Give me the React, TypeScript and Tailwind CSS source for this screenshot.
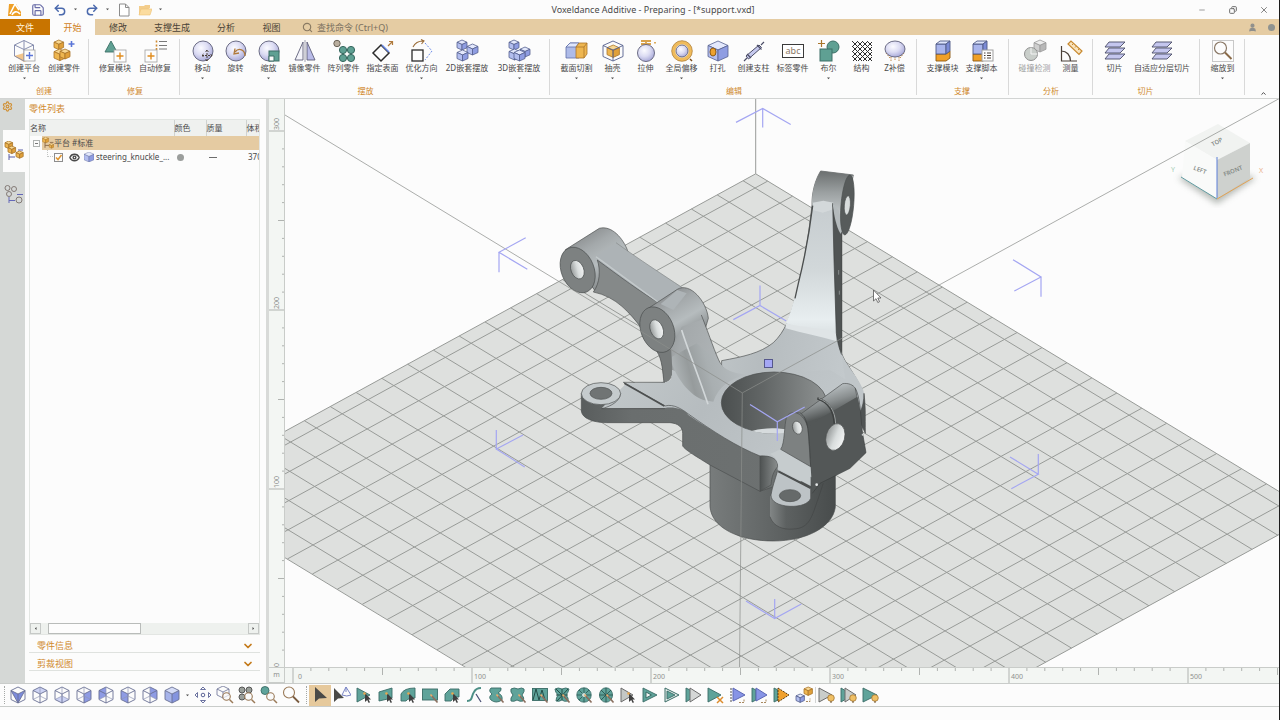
import type { ReactNode } from "react";
import {
  ChevronDown,
  ChevronUp,
  Copy,
  Eye,
  Minus,
  Redo2,
  Save,
  Search,
  Settings,
  Undo2,
  User,
  X,
} from "lucide-react";

type Tool = {
  label: string;
  icon: ReactNode;
  width?: string;
  menu?: boolean;
  disabled?: boolean;
};

type Group = { name: string; pad: string; tools: Tool[] };

const W2 = "w-[33px]";
const W4 = "w-[39px]";

function Svg({ children }: { children: ReactNode }) {
  return (
    <svg viewBox="0 0 24 24" className="w-6 h-6 block" fill="none" aria-hidden="true">
      {children}
    </svg>
  );
}

/* Small shaded box, reused by most of the ribbon icons */
function Box({ x = 0, y = 0, s = 1, tone = "blue" }: { x?: number; y?: number; s?: number; tone?: string }) {
  const tones: Record<string, string[]> = {
    blue: ["#e3e8fc", "#b3beef", "#8f9de2", "#56618f"],
    gold: ["#f8d791", "#eeb650", "#e0a03a", "#a9752a"],
    gray: ["#ececec", "#cfcfcf", "#b8b8b8", "#9a9a9a"],
  };
  const [top, left, right, line] = tones[tone];
  return (
    <g transform={`translate(${x} ${y}) scale(${s})`} stroke={line} strokeWidth={0.8 / s} strokeLinejoin="round">
      <path d="M10 0 20 4.500 10 9 0 4.500Z" fill={top} />
      <path d="M0 4.500 10 9V20L0 15.500Z" fill={left} />
      <path d="M20 4.500 10 9V20L20 15.500Z" fill={right} />
    </g>
  );
}

function Ball({ cx = 12, cy = 12, r = 10 }: { cx?: number; cy?: number; r?: number }) {
  return <circle cx={cx} cy={cy} r={r} fill="url(#ball)" stroke="#5d5f78" strokeWidth="0.9" />;
}

function PlusBox({ x, y }: { x: number; y: number }) {
  return (
    <g>
      <rect x={x} y={y} width="12" height="12" fill="#fdfdfd" stroke="#a0a0a0" strokeWidth="0.8" />
      <path d={`M${x + 6} ${y + 2.5}v7M${x + 2.5} ${y + 6}h7`} stroke="#e08c1e" strokeWidth="1.4" />
    </g>
  );
}

function Layers() {
  return (
    <Svg>
      {[15, 9, 3].map((y) => (
        <path key={y} d={`M6 ${y}h16l-5 5H2z`} fill="#c4c6ee" stroke="#4b4d66" strokeWidth="0.9" />
      ))}
    </Svg>
  );
}

const groups: Group[] = [
  {
    name: "创建",
    pad: "pl-1 pr-[5px]",
    tools: [
      {
        label: "创建平台",
        width: "w-10",
        menu: true,
        icon: (
          <Svg>
            <path d="M2 17 12 14l6 7-6 2z" fill="#f2c58c" />
            <path d="M12 1.500 21.500 6 12 10.500 2.500 6ZM2.500 6V17L12 22M12 10.500V22M21.500 6v7M12 1.500v9" stroke="#7d85a8" strokeWidth="0.9" />
            <rect x="12" y="11" width="11" height="11" fill="#fdfdfd" stroke="#a0a0a0" strokeWidth="0.8" />
            <path d="M17.500 13v7M14 16.500h7" stroke="#5b76d8" strokeWidth="1.400" />
          </Svg>
        ),
      },
      {
        label: "创建零件",
        width: "w-10",
        icon: (
          <Svg>
            <Box x={2} y={1} s={0.48} tone="gold" />
            <Box x={2} y={10} s={0.58} tone="gold" />
            <Box x={8} y={10} s={0.5} tone="gold" />
            <path d="M19.500 2v6M16.500 5h6" stroke="#5b76d8" strokeWidth="1.600" />
          </Svg>
        ),
      },
    ],
  },
  {
    name: "修复",
    pad: "pl-[6px] pr-[5px]",
    tools: [
      {
        label: "修复模块",
        width: "w-10",
        icon: (
          <Svg>
            <path d="M8 2 14 13H2Z" fill="#5fa093" stroke="#3c6f66" strokeWidth="0.900" />
            <PlusBox x={11} y={11} />
          </Svg>
        ),
      },
      {
        label: "自动修复",
        width: "w-10",
        icon: (
          <Svg>
            <path d="M13.500 1.500v2M13.500 5.500v2M13.500 9v2" stroke="#d08a30" strokeWidth="1.600" />
            <path d="M16 2.500h8M16 6.500h8M16 10h8" stroke="#6a6a6a" strokeWidth="0.900" />
            <PlusBox x={2} y={11} />
          </Svg>
        ),
      },
    ],
  },
  {
    name: "摆放",
    pad: "pl-[6px] pr-[5px]",
    tools: [
      {
        label: "移动",
        menu: true,
        icon: (
          <Svg>
            <Ball />
            <path d="M16 11v11M11 16.500h10M14.500 12.500 16 11l1.500 1.500M14.500 20.500 16 22l1.500-1.500M12.500 15 11 16.500l1.500 1.500M19.500 15l1.500 1.500-1.500 1.500" stroke="#4a4038" strokeWidth="1" strokeDasharray="2 1" />
          </Svg>
        ),
      },
      {
        label: "旋转",
        icon: (
          <Svg>
            <Ball />
            <path d="M21 17c0-6-6-9-10-4M11 9.500 10 15l5-1" stroke="#b07a3c" strokeWidth="1.300" />
          </Svg>
        ),
      },
      {
        label: "缩放",
        menu: true,
        icon: (
          <Svg>
            <Ball />
            <rect x="12" y="12" width="10" height="10" fill="#5fa093" stroke="#3c6f66" />
            <path d="M12 17h5v5h-5z" fill="#fafafa" stroke="#3c6f66" />
          </Svg>
        ),
      },
      {
        label: "镜像零件",
        width: W4,
        icon: (
          <Svg>
            <path d="M10 3v18H2Z" fill="#f4f4fa" stroke="#5d5f78" strokeWidth="0.900" />
            <path d="M14 3v18h8Z" fill="#b9bbe8" stroke="#5d5f78" strokeWidth="0.900" />
            <path d="M12 1v22" stroke="#8a8aa0" strokeWidth="0.800" />
          </Svg>
        ),
      },
      {
        label: "阵列零件",
        width: W4,
        icon: (
          <Svg>
            <circle cx="5" cy="4.500" r="3.200" fill="#b9ae9e" stroke="#6b6358" />
            {[[11, 11], [19, 11], [11, 19], [19, 19]].map(([x, y]) => (
              <circle key={`${x}-${y}`} cx={x} cy={y} r="3.600" fill="#5fa093" stroke="#35665e" />
            ))}
          </Svg>
        ),
      },
      {
        label: "指定表面",
        width: W4,
        icon: (
          <Svg>
            <path d="M10 6 18 14 10 22 2 14Z" stroke="#2a2a2a" strokeWidth="1.500" />
            <path d="M11 6 18 13" stroke="#6b8be8" strokeWidth="1.500" />
            <path d="M17 7l4-4M18 2.500h3.500V6" stroke="#b07a3c" strokeWidth="1.200" />
          </Svg>
        ),
      },
      {
        label: "优化方向",
        width: W4,
        menu: true,
        icon: (
          <Svg>
            <rect x="2" y="11" width="11" height="11" stroke="#2a2a2a" strokeWidth="1.300" />
            <path d="M15 4 22 12 15 21" stroke="#6b8be8" strokeDasharray="2 1.500" />
            <path d="M3 8c2-4 6-6 10-6M11 .500 14 2l-2.500 3" stroke="#9a6c38" strokeWidth="1.100" />
          </Svg>
        ),
      },
      {
        label: "2D嵌套摆放",
        width: "w-[52px]",
        icon: (
          <Svg>
            <Box x={2} y={1} s={0.5} />
            <Box x={12} y={5} s={0.55} />
            <Box x={2} y={11} s={0.55} />
          </Svg>
        ),
      },
      {
        label: "3D嵌套摆放",
        width: "w-[52px]",
        menu: true,
        icon: (
          <Svg>
            <Box x={2} y={1} s={0.5} />
            <Box x={2} y={10} s={0.55} />
            <Box x={13} y={8} s={0.5} />
            <Box x={7} y={11} s={0.55} />
          </Svg>
        ),
      },
    ],
  },
  {
    name: "编辑",
    pad: "pl-[7px] pr-[6px]",
    tools: [
      {
        label: "截面切割",
        width: W4,
        menu: true,
        icon: (
          <Svg>
            <path d="M1 8 5 4h9v15H1z" fill="#aebbe8" stroke="#5f6fa8" strokeWidth="0.800" />
            <path d="M1 8 5 4h9l-3 4z" fill="#dfe6fb" stroke="#5f6fa8" strokeWidth="0.800" />
            <path d="M11 8 14 4h8v11l-3 4h-8z" fill="#eeb650" stroke="#a9752a" strokeWidth="0.800" />
            <path d="M11 8h8l3-4M19 8v11" stroke="#a9752a" strokeWidth="0.800" />
          </Svg>
        ),
      },
      {
        label: "抽壳",
        menu: true,
        icon: (
          <Svg>
            <Box x={6} y={6} s={0.62} tone="gold" />
            <path d="M12 2 22 6.500v11L12 22 2 17.500v-11Z M2 6.500 12 11 22 6.500M12 11v11" stroke="#56618f" strokeWidth="0.900" />
          </Svg>
        ),
      },
      {
        label: "拉伸",
        icon: (
          <Svg>
            <path d="M7 2h10M7 5h10M12 1v6M21 3v1.500" stroke="#d9a24c" strokeWidth="1.800" />
            <Ball cy={14} r={8.500} />
          </Svg>
        ),
      },
      {
        label: "全局偏移",
        width: W4,
        menu: true,
        icon: (
          <Svg>
            <circle cx="12" cy="12" r="8.500" stroke="#efbb5c" strokeWidth="3.600" />
            <circle cx="12" cy="12" r="10.300" stroke="#a9752a" strokeWidth="0.700" />
            <Ball r={6} />
            <path d="M20 20l2 2" stroke="#7a4b18" strokeWidth="1.400" />
          </Svg>
        ),
      },
      {
        label: "打孔",
        icon: (
          <Svg>
            <Box x={2} y={2} />
            <ellipse cx="7" cy="13" rx="3" ry="4" fill="#eda22f" stroke="#8c5a14" />
          </Svg>
        ),
      },
      {
        label: "创建支柱",
        width: W4,
        icon: (
          <Svg>
            <path d="M4 17 17 6l2.500 2.500L6.500 20z" fill="#c6c9ee" stroke="#4b4d66" />
            <path d="M2 22l3-3M19 6l3-3M15 6l4.500 4.500M5 15l4 4" stroke="#4b4d66" strokeWidth="1.200" />
          </Svg>
        ),
      },
      {
        label: "标签零件",
        width: W4,
        icon: (
          <Svg>
            <rect x="1.500" y="5.500" width="21" height="13" fill="#fff" stroke="#3a3a3a" />
            <text x="12" y="15" textAnchor="middle" fontSize="9" fill="#8a7866">abc</text>
          </Svg>
        ),
      },
      {
        label: "布尔",
        menu: true,
        icon: (
          <Svg>
            <circle cx="16" cy="8" r="6" fill="#5fa093" stroke="#3c6f66" />
            <rect x="3" y="10" width="12" height="12" fill="#5fa093" stroke="#3c6f66" />
            <path d="M4.500 1v7M1 4.500h7" stroke="#a9752a" strokeWidth="1.200" />
          </Svg>
        ),
      },
      {
        label: "结构",
        icon: (
          <svg viewBox="0 0 24 24" className="w-6 h-6 block" aria-hidden="true">
            <rect x="2" y="2" width="20" height="20" fill="url(#mesh)" />
          </svg>
        ),
      },
      {
        label: "Z补偿",
        icon: (
          <Svg>
            <path d="M3 14l4 5M21 14l-4 5M8 18v4M12 17v4M16 18v4" stroke="#c08a4c" strokeDasharray="1.500 1" />
            <ellipse cx="12" cy="10" rx="10" ry="8" fill="url(#ball)" stroke="#5d5f78" strokeWidth="0.900" />
          </Svg>
        ),
      },
    ],
  },
  {
    name: "支撑",
    pad: "pl-[6px] pr-2",
    tools: [
      {
        label: "支撑模块",
        width: W4,
        icon: (
          <Svg>
            <path d="M5 15h10l4-3v7l-4 3H5z" fill="#f0a027" stroke="#8c5a14" strokeWidth="0.900" />
            <path d="M5 5h10v10H5z" fill="#a9b5ec" stroke="#4f5a86" strokeWidth="0.900" />
            <path d="M5 5 9 2h10l-4 3z" fill="#dfe5fb" stroke="#4f5a86" strokeWidth="0.900" />
            <path d="M15 5l4-3v10l-4 3z" fill="#7c8bd6" stroke="#4f5a86" strokeWidth="0.900" />
          </Svg>
        ),
      },
      {
        label: "支撑脚本",
        width: W4,
        menu: true,
        icon: (
          <Svg>
            <path d="M3 15h10l4-3v7l-4 3H3z" fill="#f0a027" stroke="#8c5a14" strokeWidth="0.900" />
            <path d="M3 5h10v10H3z" fill="#a9b5ec" stroke="#4f5a86" strokeWidth="0.900" />
            <path d="M3 5 7 2h10l-4 3z" fill="#dfe5fb" stroke="#4f5a86" strokeWidth="0.900" />
            <path d="M13 5l4-3v10l-4 3z" fill="#7c8bd6" stroke="#4f5a86" strokeWidth="0.900" />
            <rect x="12" y="11" width="11" height="11" fill="#fdfdfd" stroke="#a0a0a0" />
            <path d="M14 14h1.500M14 16.500h1.500M14 19h1.500M17 14h4M17 16.500h4M17 19h4" stroke="#4a4038" />
          </Svg>
        ),
      },
    ],
  },
  {
    name: "分析",
    pad: "pl-[6px] pr-[6px]",
    tools: [
      {
        label: "碰撞检测",
        width: W4,
        disabled: true,
        icon: (
          <Svg>
            <Box x={11} y={1} s={0.6} tone="gray" />
            <circle cx="8" cy="15" r="6.500" fill="#c9ceca" stroke="#909090" />
            <path d="M8 8.500V15h6.500" stroke="#f4f4f4" />
          </Svg>
        ),
      },
      {
        label: "测量",
        icon: (
          <Svg>
            <path d="M2.500 7v15H18M2.500 12c5 0 9 4 9 10" stroke="#4a4038" strokeWidth="1.200" />
            <path d="M9 5 12 2 23 12 20 15.500z" fill="#f9e3bd" stroke="#c88a30" strokeWidth="1.200" />
            <path d="M13 6l1.500-1.500M16 8.500 17.500 7M19 11l1.500-1.500" stroke="#c88a30" />
          </Svg>
        ),
      },
    ],
  },
  {
    name: "切片",
    pad: "pl-[5px] pr-[7px]",
    tools: [
      { label: "切片", icon: <Layers /> },
      { label: "自适应分层切片", width: "w-[62px]", icon: <Layers /> },
    ],
  },
  {
    name: "",
    pad: "pl-[6px] pr-[6px]",
    tools: [
      {
        label: "缩放到",
        menu: true,
        icon: (
          <Svg>
            <rect x="1.500" y="1.500" width="21" height="21" stroke="#c8c8c8" />
            <circle cx="9.500" cy="9" r="6" stroke="#8a7866" strokeWidth="1.200" />
            <path d="M14 13.500 20.500 20" stroke="#8a6a48" strokeWidth="2" />
          </Svg>
        ),
      },
    ],
  },
];

function RibbonButton({ tool }: { tool: Tool }) {
  return (
    <button
      type="button"
      disabled={tool.disabled}
      className={`flex flex-col items-center pt-1 whitespace-nowrap ${tool.width ?? W2}`}
    >
      {tool.icon}
      <span className={`text-[8px] leading-[10px] ${tool.disabled ? "text-[#9c9c9c]" : "text-[#4a4a4a]"}`}>
        {tool.label}
      </span>
      {tool.menu && <Caret className="mt-1" />}
    </button>
  );
}

function Caret({ className = "" }: { className?: string }) {
  return (
    <svg viewBox="0 0 5 3" className={`w-[5px] h-[3px] shrink-0 ${className}`} aria-hidden="true">
      <path d="M1 0.500h3L2.500 2.200z" fill="#4c4c4c" />
    </svg>
  );
}

function TitleBar() {
  return (
    <header className="flex items-center h-[19px] shrink-0">
      <div className="flex items-center w-[168px] shrink-0 pl-[7px]">
        <svg viewBox="0 0 15 15" className="w-[15px] h-[15px] shrink-0" aria-label="Voxeldance">
          <path d="M2 2h7l5 8v4H1z" fill="#efa027" />
          <path d="M3 12 8 2l4 6M5 13c1-3 5-5 8-1" fill="none" stroke="#fff" strokeWidth="1.600" />
        </svg>
        <button type="button" aria-label="保存" className="ml-[9px] shrink-0">
          <Save className="block w-[14px] h-[14px] text-[#6a6da8]" strokeWidth={2} />
        </button>
        <button type="button" aria-label="撤销" className="ml-2 flex shrink-0 items-center gap-[6px]">
          <Undo2 className="w-[14px] h-[14px] text-[#4a69ad]" strokeWidth={2.5} />
          <Caret />
        </button>
        <button type="button" aria-label="重做" className="ml-[7px] flex shrink-0 items-center gap-[6px]">
          <Redo2 className="w-[14px] h-[14px] text-[#4a69ad]" strokeWidth={2.5} />
          <Caret />
        </button>
        <button type="button" aria-label="新建" className="ml-2 shrink-0">
          <svg viewBox="0 0 12 14" className="block w-3 h-[14px]" aria-hidden="true">
            <path d="M1.500 1h6l3.500 3.500V13h-9.500zM7.500 1v3.500H11" fill="#fff" stroke="#8c8c8c" />
          </svg>
        </button>
        <button type="button" aria-label="打开" className="ml-2 flex shrink-0 items-center gap-[6px]">
          <svg viewBox="0 0 14 12" className="w-[14px] h-3 shrink-0" aria-hidden="true">
            <path d="M1 11V2h5l1-1h5v3" fill="#f3cd8c" />
            <path d="M1 11 3 5h11l-2 6z" fill="#fbdc9f" stroke="#efc376" strokeWidth="0.600" />
          </svg>
          <Caret />
        </button>
      </div>
      <h1 className="flex-1 text-center text-[9px] text-[#4a4a4a]">
        Voxeldance Additive - Preparing - [*support.vxd]
      </h1>
      <div className="flex justify-end w-[141px] shrink-0 text-[#6c6c6c]">
        <button type="button" aria-label="最小化" className="w-[31px] flex justify-center items-center">
          <Minus className="w-2 h-2" />
        </button>
        <button type="button" aria-label="还原" className="w-[31px] flex justify-center items-center">
          <Copy className="w-2 h-2 -scale-x-100" strokeWidth={3} />
        </button>
        <button type="button" aria-label="关闭" className="w-[31px] flex justify-center items-center">
          <X className="w-[10px] h-[10px]" />
        </button>
      </div>
    </header>
  );
}

function TabBar() {
  return (
    <nav className="flex items-stretch h-4 shrink-0 bg-[#e5cca3] text-[9px] leading-[17px] text-[#4a4336]">
      <button type="button" className="w-[50px] bg-[#c87400] text-[#fff3dc]">文件</button>
      <button type="button" className="w-[45px] bg-[#fcfcfc] text-[#d0811c]">开始</button>
      <button type="button" className="w-[46px]">修改</button>
      <button type="button" className="w-[62px]">支撑生成</button>
      <button type="button" className="w-[46px]">分析</button>
      <button type="button" className="w-[45px]">视图</button>
      <label className="flex flex-1 items-center pl-2">
        <Search className="w-[11px] h-[11px] mr-1 text-[#8a7a62]" strokeWidth={2.5} />
        <input
          aria-label="查找命令"
          placeholder="查找命令 (Ctrl+Q)"
          className="w-40 h-4 bg-transparent outline-none placeholder:text-[#7a7060]"
        />
      </label>
      <div className="flex items-center gap-[11px] pr-1">
        <User className="w-[9px] h-[9px] text-[#8f8f8c]" fill="currentColor" strokeWidth={3} />
        <span className="w-[7px] h-[7px] rounded-full bg-[#8f9390]"></span>
      </div>
    </nav>
  );
}

function Ribbon() {
  return (
    <div className="flex h-16 shrink-0 border-b border-[#d2d4d3]">
      {groups.map((group, index) => (
        <div key={index} className={`relative flex flex-col justify-between ${group.pad}`}>
          <div className="flex items-start">
            {group.tools.map((tool) => (
              <RibbonButton key={tool.label} tool={tool} />
            ))}
          </div>
          <div className="h-3 text-center text-[8px] leading-[10px] text-[#d0892e]">{group.name}</div>
          <span className="absolute right-0 top-1 bottom-[3px] w-px bg-[#d9d9d9]"></span>
        </div>
      ))}
      <button type="button" aria-label="折叠功能区" className="ml-auto self-end mr-3 mb-px">
        <ChevronUp className="w-[7px] h-[7px] text-[#333]" strokeWidth={3} />
      </button>
    </div>
  );
}

function TreeIcon() {
  return (
    <svg viewBox="0 0 20 20" className="w-5 h-5" aria-hidden="true">
      <Box x={1} y={0} s={0.38} tone="gold" />
      <Box x={4} y={5} s={0.38} tone="gold" />
      <Box x={12} y={10} s={0.36} tone="gold" />
      <path d="M5 13v6M5 16h6M14 9h5" stroke="#5b5fa8" strokeWidth="1" />
    </svg>
  );
}

function SideTabs() {
  return (
    <div className="w-[25px] shrink-0 bg-[#d5d8d6]">
      <button type="button" aria-label="设置" className="flex items-start pl-[2px] pt-[2px] h-[31px]">
        <Settings className="w-[11px] h-[11px] text-[#d19238]" strokeWidth={2.5} />
      </button>
      <button type="button" aria-label="零件" className="flex items-center justify-center w-[22px] ml-[3px] h-[42px] bg-[#fcfcfc]">
        <TreeIcon />
      </button>
      <button type="button" aria-label="支撑" className="flex items-center justify-center w-[22px] ml-[3px] h-[44px]">
        <svg viewBox="0 0 20 24" className="w-5 h-6" fill="none" aria-hidden="true">
          <g stroke="#7a706c" strokeWidth="0.900">
            <circle cx="3.500" cy="6" r="2.500" />
            <circle cx="10" cy="7" r="2.500" />
            <circle cx="5" cy="12" r="2.500" />
            <circle cx="15" cy="18" r="3" />
          </g>
          <path d="M5 15v6M5 18.500h6M13 12.500h6" stroke="#6468b8" />
        </svg>
      </button>
    </div>
  );
}

function PartTable() {
  return (
    <div className="flex flex-col flex-1 min-h-0 ml-1 mr-[6px] border border-[#e3e6e3]">
      <div className="flex-1 overflow-hidden">
        <table className="table-fixed w-[260px] text-[8px] leading-[14px] text-[#4a4a4a] text-left whitespace-nowrap">
          <thead className="bg-[#eff1ef]">
            <tr className="h-4">
              <th className="w-[144px] font-normal border-r border-[#cfd2d0]">名称</th>
              <th className="w-8 font-normal border-r border-[#cfd2d0]">颜色</th>
              <th className="w-10 font-normal border-r border-[#cfd2d0]">质量</th>
              <th className="font-normal">体积</th>
            </tr>
          </thead>
          <tbody>
            <tr className="h-[14px]">
              <td colSpan={4}>
                <div className="flex items-center h-[14px]">
                  <button type="button" aria-label="收起" className="flex items-center justify-center w-[7px] h-[7px] ml-[3px] mr-[2px] border border-[#b0b3b1]">
                    <span className="w-[3px] h-px bg-[#777]"></span>
                  </button>
                  <div className="flex items-center flex-1 h-[14px] bg-[#e5cba2]">
                    <svg viewBox="0 0 20 20" className="w-3 h-3" aria-hidden="true">
                      <Box x={1} y={0} s={0.5} tone="gold" />
                      <path d="M5 9v9M5 14h7M13 9h6" stroke="#8a6a48" strokeWidth="1.500" />
                      <Box x={12} y={11} s={0.38} tone="gold" />
                    </svg>
                    <span>平台 #标准</span>
                  </div>
                </div>
              </td>
            </tr>
            <tr className="h-[14px]">
              <td>
                <div className="flex items-center h-[14px] pl-[17px]">
                  <span className="w-[6px] h-[7px] mb-[7px] border-l border-b border-dotted border-[#c4c6c4]"></span>
                  <label className="relative w-[9px] h-[9px] ml-px mr-[6px]">
                    <input type="checkbox" defaultChecked aria-label="steering_knuckle" className="block w-[9px] h-[9px] appearance-none border border-[#8d8d8d]" />
                    <svg viewBox="0 0 9 9" className="absolute inset-0" fill="none" aria-hidden="true">
                      <path d="M2 4.500 4 6.500 7.500 2" stroke="#e0952f" strokeWidth="1.500" />
                    </svg>
                  </label>
                  <Eye className="w-[11px] h-[11px] mr-1 text-[#4a4a4a]" strokeWidth={3} />
                  <svg viewBox="0 0 20 20" className="w-[10px] h-[10px] mr-[2px]" aria-hidden="true">
                    <Box />
                  </svg>
                  <span>steering_knuckle_...</span>
                </div>
              </td>
              <td>
                <span className="block w-[7px] h-[7px] ml-[3px] rounded-full bg-[#9b9e9c]"></span>
              </td>
              <td>
                <span className="block w-2 h-px ml-[3px] bg-[#6c6c6c]"></span>
              </td>
              <td className="pl-[2px]">370</td>
            </tr>
          </tbody>
        </table>
      </div>
      <div className="flex items-center justify-between h-[11px] bg-[#eef1ee]">
        <button type="button" aria-label="向左" className="w-[11px] h-[11px] border border-[#c6c9c7] flex items-center justify-center">
          <Caret className="rotate-90" />
        </button>
        <div className="flex-1 px-[7px]">
          <div className="w-[93px] h-[11px] border border-[#b9bcba] bg-[#fdfdfd]"></div>
        </div>
        <button type="button" aria-label="向右" className="w-[11px] h-[11px] border border-[#c6c9c7] flex items-center justify-center">
          <Caret className="-rotate-90" />
        </button>
      </div>
    </div>
  );
}

function Fold({ title }: { title: string }) {
  return (
    <button
      type="button"
      className="flex items-center justify-between h-[18px] ml-1 mr-[6px] pl-2 pr-[6px] pt-[5px] border-b border-[#dfe2df] text-[9px] leading-3 text-[#d0892e]"
    >
      {title}
      <ChevronDown className="w-3 h-3 text-[#c47a1a]" strokeWidth={3.5} />
    </button>
  );
}

/* Build platform: grid lines run parallel to the two far edges */
const LEFT_DIR = [-1, 0.547];
const RIGHT_DIR = [1, 0.607];
const APEX = [755.7, 173.8];
const LEFT_LEN = 580;
const RIGHT_LEN = 560.8;

function at(a: number, b: number) {
  return [APEX[0] + LEFT_DIR[0] * a + RIGHT_DIR[0] * b, APEX[1] + LEFT_DIR[1] * a + RIGHT_DIR[1] * b];
}

function seg(p: number[], q: number[]) {
  return `M${p[0].toFixed(1)} ${p[1].toFixed(1)}L${q[0].toFixed(1)} ${q[1].toFixed(1)}`;
}

function Platform() {
  const steps = Array.from({ length: 23 }, (_, i) => i);
  const leftStops = [0, ...steps.map((i) => 12.7 + i * 25.8)];
  const rightStops = [0, ...steps.map((i) => 12 + i * 24.94)];
  const corners = [at(0, 0), at(LEFT_LEN, 0), at(LEFT_LEN, RIGHT_LEN), at(0, RIGHT_LEN)];
  const lines = [
    ...leftStops.map((a) => seg(at(a, 0), at(a, RIGHT_LEN))),
    ...rightStops.map((b) => seg(at(0, b), at(LEFT_LEN, b))),
  ].join("");
  return (
    <g>
      <polygon points={corners.map((c) => c.join(",")).join(" ")} fill="#dee0de" />
      <path d={lines} stroke="#989b98" strokeWidth="1" />
      <path d="M755.700 173.800V98" stroke="#989b98" />
    </g>
  );
}

function Knuckle() {
  return (
    <g transform="translate(540 160) scale(0.33333)" stroke="#4c4f4f" strokeWidth="2" strokeLinejoin="round">
      {/* upright arm */}
      <path
        d="M545 602 C610 590 660 580 700 548 C735 515 752 470 770 400 C788 330 805 240 816 135 C815 100 825 60 842 33 L940 45 L905 225 L905 580 C915 610 945 640 960 680 C972 705 976 740 974 765 L960 840 L540 800Z"
        fill="url(#deck)"
      />
      <path d="M842 33C825 60 815 100 816 130L880 128L902 190C900 130 915 60 940 45Z" fill="url(#bossTop)" stroke="none" />
      <path d="M818 137 850 128 878 134 884 300 888 540C840 530 780 505 737 490C752 465 765 410 775 370C795 290 808 220 818 137Z" fill="url(#blade)" stroke="none" />
      <path d="M818 128 850 122 880 128V148L848 158 818 150Z" fill="#d3d8da" stroke="none" />
      <path d="M737 490C790 505 840 500 888 520V543C840 530 790 520 737 505Z" fill="#dfe4e6" stroke="none" />
      <path d="M878 130C884 160 892 200 905 220L905 585C898 565 893 550 889 520L882 300Z" fill="#505454" stroke="#3b3e3e" />
      <path d="M878 130C882 165 888 200 902 222L908 195 896 150Z" fill="#b4babc" stroke="none" />
      <path d="M818 137C808 220 795 290 775 370L765 415" fill="none" strokeWidth="4" />
      <ellipse cx="922" cy="135" rx="19" ry="90" transform="rotate(5 922 135)" fill="#575b5b" />
      <ellipse cx="922" cy="136" rx="9" ry="29" transform="rotate(5 922 136)" fill="#d9dddd" />
      <path d="M896 330v14M898 392v12" stroke="#a5a9a9" />

      {/* left arm */}
      <path d="M75 270 178 205C215 195 250 235 264 275L262 300 180 370 165 392Z" fill="url(#bossLeft)" />
      <path d="M170 288 228 248C300 300 370 345 432 385L440 440 390 500 300 480 178 340Z" fill="#adb3b6" stroke="none" />
      <path d="M228 248C300 300 370 345 425 382" fill="none" stroke="#85898a" />
      <path d="M172 300 C240 350 300 395 362 432L305 505C270 460 230 410 160 396C180 370 182 330 172 300Z" fill="#858989" />
      <path d="M168 290C230 335 290 380 362 432" fill="none" stroke="#c4cacc" strokeWidth="4" />
      <ellipse cx="113" cy="330" rx="49" ry="71" transform="rotate(-22 113 330)" fill="#7d8181" />
      <ellipse cx="112" cy="329" rx="19" ry="29" transform="rotate(-22 112 329)" fill="url(#hole)" />

      {/* middle boss sits behind the leg */}
      <path d="M325 445 412 388C450 365 500 425 505 475L497 502 430 560 390 560Z" fill="url(#bossLeft)" />
      <path d="M362 432 412 390 440 400 400 450Z" fill="#aeb4b7" stroke="none" />
      <path d="M350 560C368 600 368 640 372 667C388 668 398 650 397 630L470 710 640 655C590 645 555 640 542 612C525 580 510 530 488 478L425 500 405 545Z" fill="url(#leg)" stroke="none" />
      <path d="M350 573C368 600 368 640 372 667C388 668 398 650 397 630L393 560Z" fill="#767a7a" stroke="none" />
      <path d="M350 573C368 600 368 640 372 667M484 465C510 530 525 580 542 612C555 635 575 643 600 648" fill="none" />
      <ellipse cx="352" cy="509" rx="49" ry="71" transform="rotate(-22 352 509)" fill="#7d8181" />
      <ellipse cx="350" cy="508" rx="19" ry="30" transform="rotate(-22 350 508)" fill="url(#hole)" />

      <g transform="translate(90 570)">
        {/* lower tube */}
        <path d="M420 330V470C425 535 510 573 610 573C710 573 790 530 796 470V360Z" fill="url(#tube)" />
        {/* deck side wall */}
        <path d="M34 130V183C36 205 70 218 110 218H300C325 220 338 232 338 250V288C345 300 380 320 420 345L570 424 640 400 620 300 330 170Z" fill="url(#wall)" />
        {/* deck surface */}
        <path
          d="M95 175 170 99 285 97C300 95 308 85 306 60L400 90 450 60 510 75 780 60 880 120 800 330 722 412 623 362C625 330 600 315 570 318C500 290 430 245 355 195C340 175 310 170 285 174Z"
          fill="url(#deck)"
          stroke="none"
        />
        <path d="M285 97H160L285 168C310 160 340 180 355 192M355 192C430 245 500 290 570 318" fill="none" />
        <path d="M306 40C310 60 345 130 400 150L430 155C445 110 480 85 530 74C490 70 465 60 450 40L380 -20 306 20Z" fill="url(#fillet)" stroke="none" />
        <path d="M335 -60C350 -10 385 75 414 163" fill="none" stroke="#d2d7d9" strokeWidth="5" />
        <path d="M163 100 283 168" strokeWidth="5" />
        <path d="M152 130C150 155 120 170 95 176H285" fill="none" />
        <ellipse cx="93" cy="131" rx="59" ry="33" fill="#c5cbcd" />
        <ellipse cx="93" cy="130" rx="33" ry="18" fill="#707474" />
        {/* bore */}
        <ellipse cx="612" cy="158" rx="158" ry="92" fill="url(#bore)" />
        <path d="M545 243C580 233 620 233 660 240V248C630 253 580 253 545 243Z" fill="#d6dbdd" stroke="none" />
        {/* flank to the right of the bore */}
        <path d="M812 0C820 45 880 90 884 140L870 210 830 110Z" fill="#c0c6c9" stroke="none" />
        <path d="M882 130C886 160 886 200 886 250L872 220 868 190C878 175 882 150 882 130Z" fill="#505454" />
        {/* notch */}
        <path d="M570 318C600 316 625 325 623 350C610 365 605 380 603 405L570 424Z" fill="url(#notch)" />
        {/* bottom lug */}
        <path d="M600 438V500C610 530 640 540 670 537C720 535 725 500 745 445L760 400 722 380Z" fill="url(#lug)" stroke="none" />
        <path d="M600 500C610 530 640 540 670 537C720 535 725 500 745 445L760 400" fill="none" stroke="#3e4141" strokeWidth="1.500" />
        <path d="M623 362 722 415V445C715 462 690 470 660 469C625 467 603 455 603 435C607 410 615 390 623 362Z" fill="#bdc3c6" />
        <ellipse cx="660" cy="437" rx="32" ry="18" fill="#666a6a" />
        <path d="M625 364 722 414" strokeWidth="6" />
        {/* clamp */}
        <path d="M600 312 632 298 722 355V408L626 358C625 340 620 320 600 312Z" fill="#c6ccce" stroke="none" />
        <path d="M655 200C665 188 680 186 695 190L818 101C835 98 850 105 856 115L870 190 715 250Z" fill="url(#clampTop)" />
        <path d="M650 200C660 180 700 180 714 235L722 350 632 298C645 280 642 225 650 200Z" fill="#7d8181" />
        <path d="M714 235C726 222 736 214 748 207L862 140C870 165 873 200 876 240L888 308 840 355 750 400 727 430 722 350Z" fill="#535757" stroke="none" />
        <path d="M856 115C870 140 872 190 876 240L888 308 840 355 750 400 727 430" fill="none" stroke="#3c3f3f" />
        <path d="M692 190C712 205 716 225 722 350" fill="none" stroke="#3c3f3f" />
        <ellipse cx="682" cy="233" rx="14" ry="20" transform="rotate(-18 682 233)" fill="url(#hole)" />
        <path d="M742 145C775 155 792 180 794 222" fill="none" stroke="#3d4040" strokeWidth="7" />
        <path d="M746 145C778 158 795 180 797 222" fill="none" stroke="#9da2a2" strokeWidth="3" />
        <ellipse cx="796" cy="261" rx="28" ry="41" transform="rotate(15 796 261)" fill="url(#hole)" />
        <circle cx="740" cy="404" r="4" fill="#e5e8e8" stroke="none" />
        <circle cx="878" cy="254" r="3" fill="#c9cccc" stroke="none" />
      </g>
    </g>
  );
}

const brackets = [
  "M736 122.400 762.700 108.400 790.700 124.600M762.700 108.400V127.600",
  "M525.700 237.800 499 252.300 527.300 269.300M499 252.300V272.300",
  "M523 435 496.300 449 524.700 466.900M496.300 449V430",
  "M733.300 319.600 760 305.500 786.300 321M760 305.500V285.600",
  "M1013 259.700 1041 277 1014.300 291M1041 277V296.700",
  "M1010 456.900 1038.300 474.300 1011.300 488.700M1038.300 474.300V454",
  "M746 601 774.700 618.500 801.300 604M774.700 618.500V599",
  "M750 404.500 777.300 421.700 804.700 407M777.300 421.700V441",
];

function ViewCube() {
  return (
    <g transform="translate(1140 100)">
      <path d="M38 78 77 104 116 78 77 66Z" fill="#9aa09a" opacity="0.700" filter="url(#soft)" />
      <path d="M78 24 110 43 77 60 45 41Z" fill="#f1f3f1" />
      <path d="M45 41 77 60V99L42 78Z" fill="#f9faf9" />
      <path d="M110 43 77 60V99L110 78Z" fill="#ced1ce" />
      <path d="M41 77 77 99" stroke="#5f9aa0" strokeWidth="1" />
      <path d="M77 99 113 78" stroke="#e3a354" strokeWidth="1" />
      <path d="M77 57V98" stroke="#5a7fd8" strokeWidth="1" />
      <g fontSize="6" fontWeight="600" fill="#868c88" textAnchor="middle">
        <text x="77" y="44" transform="rotate(-28 77 42)">TOP</text>
        <text x="60" y="72" transform="rotate(20 60 70)">LEFT</text>
        <text x="93" y="73" transform="rotate(-22 93 71)">FRONT</text>
      </g>
      <g fontSize="7" textAnchor="middle">
        <text x="33" y="72" fill="#a5cdb5">Y</text>
        <text x="121" y="73" fill="#eab08a">X</text>
      </g>
    </g>
  );
}

function Viewport() {
  return (
    <svg
      viewBox="285 99 994 568"
      preserveAspectRatio="xMidYMid slice"
      className="flex-1 min-w-0 h-full"
      fill="none"
      role="img"
      aria-label="steering_knuckle"
    >
      <defs>
        <linearGradient id="deck" x1="0" y1="0" x2="1" y2="0.300">
          <stop offset="0" stopColor="#c3c9cb" />
          <stop offset="0.450" stopColor="#b6bcbf" />
          <stop offset="1" stopColor="#c3c9cc" />
        </linearGradient>
        <linearGradient id="bossTop" x1="0" y1="0" x2="0" y2="1">
          <stop offset="0" stopColor="#6b6f6f" />
          <stop offset="0.400" stopColor="#9a9fa0" />
          <stop offset="0.800" stopColor="#c0c5c7" />
        </linearGradient>
        <linearGradient id="blade" x1="0" y1="0" x2="0" y2="1">
          <stop offset="0" stopColor="#c6cccf" />
          <stop offset="0.500" stopColor="#d2d8da" />
          <stop offset="0.850" stopColor="#e8eef0" />
          <stop offset="1" stopColor="#d6dcde" />
        </linearGradient>
        <linearGradient id="bossLeft" x1="0" y1="0" x2="0.600" y2="1">
          <stop offset="0" stopColor="#77797a" />
          <stop offset="0.400" stopColor="#a4a9ab" />
          <stop offset="0.650" stopColor="#b6bcbe" />
          <stop offset="1" stopColor="#808485" />
        </linearGradient>
        <linearGradient id="leg" x1="0" y1="0" x2="1" y2="0.200">
          <stop offset="0" stopColor="#868a8a" />
          <stop offset="0.300" stopColor="#a4a9ab" />
          <stop offset="0.500" stopColor="#a9aeb0" />
          <stop offset="1" stopColor="#b6bcbf" />
        </linearGradient>
        <linearGradient id="fillet" x1="0" y1="0.600" x2="1" y2="0.400">
          <stop offset="0" stopColor="#b4babc" />
          <stop offset="0.250" stopColor="#969b9c" />
          <stop offset="0.500" stopColor="#a9afb1" />
          <stop offset="1" stopColor="#b8bec1" />
        </linearGradient>
        <linearGradient id="hole" x1="0" y1="0" x2="1" y2="0.200">
          <stop offset="0" stopColor="#8a8e8e" />
          <stop offset="0.600" stopColor="#d9dddd" />
          <stop offset="1" stopColor="#eef0f0" />
        </linearGradient>
        <linearGradient id="tube">
          <stop offset="0" stopColor="#787c7c" />
          <stop offset="0.450" stopColor="#636767" />
          <stop offset="1" stopColor="#484c4c" />
        </linearGradient>
        <linearGradient id="wall">
          <stop offset="0" stopColor="#595d5d" />
          <stop offset="0.250" stopColor="#6a6e6e" />
          <stop offset="1" stopColor="#6d7171" />
        </linearGradient>
        <linearGradient id="bore">
          <stop offset="0" stopColor="#4b4f4f" />
          <stop offset="0.400" stopColor="#626666" />
          <stop offset="1" stopColor="#8e9292" />
        </linearGradient>
        <linearGradient id="notch">
          <stop offset="0" stopColor="#4e5252" />
          <stop offset="1" stopColor="#8a8e8e" />
        </linearGradient>
        <linearGradient id="lug">
          <stop offset="0" stopColor="#828686" />
          <stop offset="0.300" stopColor="#5d6161" />
          <stop offset="1" stopColor="#4b4f4f" />
        </linearGradient>
        <linearGradient id="clampTop" x1="0.350" y1="0.200" x2="0.550" y2="0.650">
          <stop offset="0" stopColor="#b4babc" />
          <stop offset="0.500" stopColor="#8a8f90" />
          <stop offset="1" stopColor="#535757" />
        </linearGradient>
        <filter id="soft">
          <feGaussianBlur stdDeviation="3" />
        </filter>
      </defs>
      <Platform />
      <path d={brackets[3]} stroke="#a4a6f2" strokeWidth="1.200" />
      <Knuckle />
      <ViewCube />
      {/* near edges of the build volume */}
      <path d="M285 115 742.300 392.900 739.500 668M742.300 392.900 1279 98.700" stroke="#8c8e8c" strokeWidth="0.900" opacity="0.800" />
      {brackets.map((d, i) => i !== 3 && <path key={i} d={d} stroke="#a4a6f2" strokeWidth="1.200" />)}
      <rect x="764.500" y="359.500" width="8" height="8" fill="#a5a7f5" stroke="#55578c" />
      <path d="M873.500 290v11l2.500-2.300 1.800 3.800 1.700-.8-1.700-3.700h3.200z" fill="#fff" stroke="#555" strokeWidth="0.800" />
    </svg>
  );
}

const TICK = 17.9;

function tickLength(i: number) {
  if (i % 10 === 0) return 16;
  return i % 5 === 0 ? 7 : 3;
}

function RulerY() {
  return (
    <svg className="w-4 h-full shrink-0 bg-[#f3f6f3] border-r border-[#c9ccc9]" aria-hidden="true">
      {Array.from({ length: 31 }, (_, i) => {
        const y = 32 + i * TICK;
        return (
          <g key={i}>
            <path d={`M16 ${y}h-${tickLength(i)}`} stroke="#b0b3b0" />
            {i % 10 === 0 && (
              <text x="10" y={y - 1} transform={`rotate(-90 10 ${y - 1})`} fontSize="7" fill="#8f928f">
                {300 - i * 10}
              </text>
            )}
          </g>
        );
      })}
    </svg>
  );
}

function RulerX() {
  return (
    <div className="flex h-4 shrink-0 bg-[#f3f6f3] border-t border-[#c9ccc9] text-[7px] text-[#8f928f]">
      <span className="w-4 shrink-0 text-center leading-[14px] border-r border-b border-[#c9ccc9]">m</span>
      <svg className="flex-1 h-4 min-w-0" aria-hidden="true">
        {Array.from({ length: 56 }, (_, i) => {
          const x = 8 + i * TICK;
          return (
            <g key={i}>
              <path d={`M${x} 0v${tickLength(i)}`} stroke="#b0b3b0" />
              {i % 10 === 0 && (
                <text x={x + (i ? 2 : 5)} y="11" fontSize="7" fill="#8f928f">
                  {i * 10}
                </text>
              )}
            </g>
          );
        })}
      </svg>
    </div>
  );
}

/* ---- bottom toolbar ---- */

function Small({ children }: { children: ReactNode }) {
  return (
    <svg viewBox="0 0 18 18" className="w-[18px] h-[18px]" fill="none" aria-hidden="true">
      {children}
    </svg>
  );
}

const FACES: Record<string, string> = {
  top: "M9 1 16 4.500 9 8 2 4.500Z",
  bottom: "M9 10 16 13.500 9 17 2 13.500Z",
  right: "M9 8 16 4.500V13.500L9 17Z",
  left: "M2 4.500 9 8V17L2 13.500Z",
  backLeft: "M9 1 2 4.500V13.500L9 10Z",
  backRight: "M9 1 16 4.500V13.500L9 10Z",
};

function WireCube({ face, solid }: { face?: string; solid?: boolean }) {
  return (
    <Small>
      {solid && (
        <g>
          <path d={FACES.top} fill="#d5dcf7" />
          <path d={FACES.left} fill="#a6b3ea" />
          <path d={FACES.right} fill="#8494df" />
        </g>
      )}
      {face && <path d={FACES[face]} fill={face === "top" || face === "bottom" ? "#cdd3f4" : "#8e9be4"} />}
      <path d="M9 1 16 4.500V13.500L9 17 2 13.500V4.500ZM2 4.500 9 8 16 4.500M9 8V17" stroke="#6a7094" strokeWidth="0.900" />
      {!solid && <path d="M9 1V10M2 13.500 9 10 16 13.500" stroke="#9096b4" strokeWidth="0.700" />}
    </Small>
  );
}

function Lens() {
  return (
    <g>
      <circle cx="10.500" cy="10.500" r="3.800" fill="#fafafa" fillOpacity="0.700" stroke="#9a7a58" strokeWidth="1.100" />
      <path d="M13.500 13.500 17 17" stroke="#9a7a58" strokeWidth="1.500" />
    </g>
  );
}

const TEAL = { fill: "#5fa39a", stroke: "#3a6c66", strokeWidth: 0.9 };

function Pointer() {
  return (
    <g>
      <path d="M10 7v9l2.200-2 1.500 3 1.300-.7-1.500-2.800H16z" fill="#3f3f3f" />
      <circle cx="9.500" cy="7.500" r="1.300" fill="#e8a850" />
    </g>
  );
}

function Wand() {
  return (
    <g>
      <path d="M10 9 16.500 16.500" stroke="#8b7060" strokeWidth="1.700" />
      <path d="M9.500 8.500 11 10.200" stroke="#e8b070" strokeWidth="1.700" />
    </g>
  );
}

function Bulb() {
  return (
    <g>
      <circle cx="13" cy="12" r="3.300" fill="#f0c065" stroke="#9a6c28" strokeWidth="0.700" />
      <path d="M12 16h2" stroke="#6a4a20" strokeWidth="1.200" />
    </g>
  );
}

const viewTools: [string, ReactNode][] = [
  ["等轴测", <Small><path d="M2 4.500 9 8 16 4.500 9 17Z" fill="#7c8bdc" /><path d="M9 1 16 4.500V13.500L9 17 2 13.500V4.500ZM2 4.500 9 8 16 4.500M9 8V17M2 4.500 9 17 16 4.500" stroke="#6a7094" strokeWidth="0.900" /></Small>],
  ["顶视图", <WireCube face="top" />],
  ["底视图", <WireCube face="bottom" />],
  ["前视图", <WireCube face="right" />],
  ["后视图", <WireCube face="backLeft" />],
  ["左视图", <WireCube face="left" />],
  ["右视图", <WireCube face="backRight" />],
  ["着色", <WireCube solid />],
];

const zoomTools: [string, ReactNode][] = [
  ["平移", <Small><circle cx="9" cy="9" r="1.800" stroke="#5c6496" /><path d="M6.500 3.500 9 1l2.500 2.500zM6.500 14.500 9 17l2.500-2.500zM3.500 6.500 1 9l2.500 2.500zM14.500 6.500 17 9l-2.500 2.500z" stroke="#5c6496" strokeWidth="0.900" /></Small>],
  ["缩放平台", <Small><path d="M7 0 13 3V9L7 12 1 9V3ZM1 3 7 6 13 3M7 6V12" stroke="#6a7094" strokeWidth="0.800" /><Lens /></Small>],
  ["缩放全部", <Small><g fill="#9a9f9a" stroke="#555"><circle cx="4" cy="4" r="3" /><circle cx="11" cy="4" r="3" /><circle cx="4" cy="11" r="3" /></g><Lens /></Small>],
  ["缩放选中", <Small><circle cx="5" cy="4.500" r="4" {...TEAL} /><Lens /></Small>],
  ["框选缩放", <Small><circle cx="7" cy="6.500" r="5.500" stroke="#9a7a58" strokeWidth="1.100" /><path d="M11 10.500 17 16.500" stroke="#7a5c40" strokeWidth="1.800" /></Small>],
];

const selectTools: [string, ReactNode][] = [
  ["选择", <Small><path d="M4 1v15l4-3.500 8-.5z" fill="#4a4a48" /></Small>],
  ["选择零件", <Small><path d="M1 2v14l4-3.500 6-.5z" fill="#4a4a48" /><path d="M9 9 13 1l5 8q-4 2-9 0zM13 1v5" stroke="#7884c4" /></Small>],
  ["三角", <Small><path d="M2 2 15 9 2 16Z" {...TEAL} /><Pointer /></Small>],
  ["平面", <Small><path d="M2 6 15 2v10L2 15z" {...TEAL} /><Pointer /></Small>],
  ["曲面", <Small><path d="M2 15V8q3-6 14-6v10q-7 0-9 3z" {...TEAL} /><Pointer /></Small>],
  ["矩形", <Small><rect x="1.500" y="3" width="15" height="11" {...TEAL} /><Wand /></Small>],
  ["多边形", <Small><path d="M2 15V8l5-5h9v8h-5l-3 4z" {...TEAL} /><Pointer /></Small>],
  ["画笔", <Small><path d="M2 15c6 0 4-5 7-9 1-2 3-4 7-4" stroke="#4d8f86" strokeWidth="2" /><path d="M11 8l5 8" stroke="#4a5074" strokeWidth="1.300" /></Small>],
  ["区域", <Small><path d="M4 2h10q1 3-3 5 5 2 4 7-6 4-11 0-3-3 1-6-4-3-1-6z" {...TEAL} /><Wand /></Small>],
  ["套索", <Small><path d="M2 3q3-2 7 0 4-2 6 0 1 2-2 6 3 3 1 6-3 1-6-1-3 2-6 1-1-3 2-6-3-3-2-6z" {...TEAL} /><Wand /></Small>],
  ["锐边", <Small><rect x="1.500" y="2.500" width="15" height="12" {...TEAL} /><path d="M2 14 5 3l3 11 3-10 3 10" stroke="#234c47" /><Wand /></Small>],
  ["壳体", <Small><path d="M2 3q3-2 7 0 4-2 7 0-1 4-3 6 3 3 2 6-4 1-6-1-3 2-6 1 0-3 2-6-3-3-3-6z" {...TEAL} /><path d="M3 3l11 11M15 3 4 15M9 3v11M3 9h12" stroke="#234c47" /><Wand /></Small>],
  ["扇形", <Small><circle cx="9" cy="9" r="7.200" {...TEAL} /><path d="M9 2v14M2 9h14M4 4l10 10M14 4 4 14" stroke="#234c47" strokeWidth="0.700" /><circle cx="9" cy="9" r="2" fill="#cfe3df" /><Wand /></Small>],
  ["圆形", <Small><ellipse cx="9" cy="9" rx="6.500" ry="7.200" {...TEAL} /><path d="M9 2v14M2.500 9h13M4 4l10 10M14 4 4 14" stroke="#234c47" strokeWidth="0.800" /><Wand /></Small>],
];

const markTools: [string, ReactNode][] = [
  ["切换", <Small><path d="M2 2 14 9 2 16Z" fill="#c4c8c5" stroke="#6c6c6c" /><Pointer /></Small>],
  ["扩展", <Small><path d="M2 2 16 9 2 16Z" {...TEAL} /><path d="M5 6 10.500 9 5 12Z" fill="#f3f6f5" stroke="#3a6c66" /></Small>],
  ["收缩", <Small><path d="M2 2 16 9 2 16Z" fill="#e3ecea" stroke="#3a6c66" /><path d="M4 5 12 9 4 13Z" {...TEAL} /></Small>],
  ["反选", <Small><path d="M1 2v14l6-4V5z" {...TEAL} /><path d="M5 2 16 9 5 16Z" fill="#d5d7d6" stroke="#6c6c6c" /></Small>],
  ["删除", <Small><path d="M1 2 14 9 1 16Z" {...TEAL} /><path d="M10 11l6 6M16 11l-6 6" stroke="#dd8c2c" strokeWidth="1.500" /></Small>],
  ["隐藏", <Small><path d="M2 2v14" stroke="#888" strokeDasharray="2 1" strokeWidth="1.500" /><path d="M4 2 16 9 4 15Z" fill="#8794e6" stroke="#5d68b4" /><path d="M10 16.500h5v-3" stroke="#a98a60" strokeDasharray="2 1" /></Small>],
  ["显示", <Small><path d="M1 2v14l4-2V4z" {...TEAL} /><path d="M5 2 16 9 5 15Z" fill="#8794e6" stroke="#5d68b4" /><path d="M10 16.500h5v-3" stroke="#a98a60" strokeDasharray="2 1" /></Small>],
  ["标记", <Small><path d="M1 2v14l4-2V4z" {...TEAL} /><path d="M5 2 16 9 5 16Z" fill="#f0a02c" stroke="#5a3c10" strokeDasharray="2 1" /></Small>],
  ["分离", <Small><Box x={1} y={8} s={0.42} /><Box x={9} y={1} s={0.42} tone="gold" /><path d="M11 15.500h4v-3" stroke="#a98a60" strokeDasharray="2 1" /></Small>],
];

const lightTools: [string, ReactNode][] = [
  ["高亮", <Small><path d="M1 2 14 9 1 16Z" fill="#c9cdca" stroke="#6c6c6c" /><Bulb /></Small>],
  ["高亮反选", <Small><path d="M1 2v14l5-3V5z" {...TEAL} /><path d="M5 2 16 9 5 16Z" fill="#c9cdca" stroke="#6c6c6c" /><Bulb /></Small>],
  ["高亮标记", <Small><path d="M1 2 15 9 1 16Z" {...TEAL} /><Bulb /></Small>],
];

function ToolSet({ tools, active }: { tools: [string, ReactNode][]; active?: number }) {
  return (
    <div className="flex">
      {tools.map(([label, icon], i) => (
        <button
          key={label}
          type="button"
          aria-label={label}
          className={`flex items-center justify-center w-[22px] h-[21px] ${i === active ? "bg-[#e6c99c]" : ""}`}
        >
          {icon}
        </button>
      ))}
    </div>
  );
}

function Handle() {
  return <span className="w-px h-[18px] shrink-0 border-l border-dotted border-[#a5a8a6]"></span>;
}

function BottomBar() {
  return (
    <div className="flex items-center h-6 shrink-0 pl-1 border-y border-[#c9ccca] overflow-hidden">
      <Handle />
      <div className="flex items-center pl-[2px]">
        <ToolSet tools={viewTools} />
        <Caret className="mx-[2px]" />
        <ToolSet tools={zoomTools} />
      </div>
      <div className="flex items-center pl-1 gap-[2px]">
        <Handle />
        <ToolSet tools={selectTools} active={0} />
      </div>
      <div className="flex items-center">
        <ToolSet tools={markTools} />
        <span className="w-px h-4 bg-[#d2d4d3]"></span>
        <ToolSet tools={lightTools} />
      </div>
    </div>
  );
}

export default function App() {
  return (
    <div className="flex flex-col h-screen overflow-hidden bg-[#fcfcfc] border-r border-[#1c1c1c] font-['Noto_Sans','Noto_Sans_CJK_SC',sans-serif]">
      {/* Paint shared by the toolbar icons */}
      <svg className="absolute w-0 h-0" aria-hidden="true">
        <defs>
          <radialGradient id="ball" cx="0.4" cy="0.35" r="0.7">
            <stop offset="0" stopColor="#fbfbff" />
            <stop offset="0.5" stopColor="#dcdcf3" />
            <stop offset="1" stopColor="#a3a4d6" />
          </radialGradient>
          <pattern id="mesh" width="5" height="5" patternUnits="userSpaceOnUse">
            <path d="M0 0 5 5M5 0 0 5" stroke="#2e2e2e" strokeWidth="1" />
          </pattern>
        </defs>
      </svg>
      <TitleBar />
      <TabBar />
      <Ribbon />
      <main className="flex flex-1 min-h-0">
        <SideTabs />
        <aside className="flex flex-col w-[241px] shrink-0">
          <h2 className="h-5 pl-1 text-[9px] leading-5 text-[#d0892e]">零件列表</h2>
          <PartTable />
          <Fold title="零件信息" />
          <Fold title="剪裁视图" />
          <div className="h-3 shrink-0"></div>
        </aside>
        <div className="w-[3px] shrink-0 bg-[#d8dad8]"></div>
        <section className="flex flex-col flex-1 min-w-0">
          <div className="flex flex-1 min-h-0">
            <RulerY />
            <Viewport />
          </div>
          <RulerX />
        </section>
      </main>
      <BottomBar />
      <footer className="h-[13px] shrink-0"></footer>
    </div>
  );
}
